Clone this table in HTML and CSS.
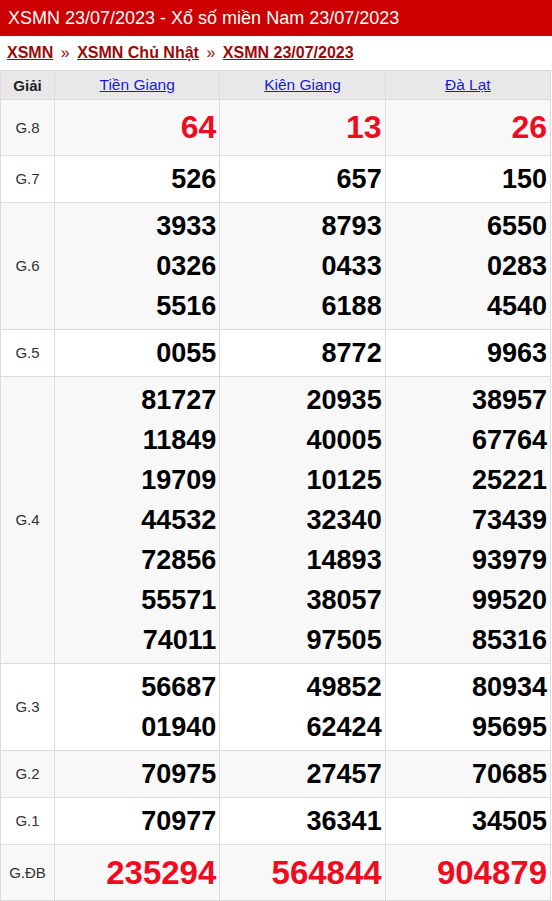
FILE: index.html
```html
<!DOCTYPE html>
<html lang="vi">
<head>
<meta charset="utf-8">
<title>XSMN 23/07/2023</title>
<link rel="stylesheet" href="styles.css">
</head>
<body>
<h1 class="title">XSMN 23/07/2023 - Xổ số miền Nam 23/07/2023</h1>
<div class="crumbs">
  <a href="#">XSMN</a><span class="sep">»</span><a href="#">XSMN Chủ Nhật</a><span class="sep">»</span><a href="#">XSMN 23/07/2023</a>
</div>
<table class="kq">
  <colgroup><col class="c0"><col class="c1"><col class="c1"><col class="c1"></colgroup>
  <thead>
    <tr><th class="lbl-h">Giải</th><th><a href="#">Tiền Giang</a></th><th><a href="#">Kiên Giang</a></th><th><a href="#">Đà Lạt</a></th></tr>
  </thead>
  <tbody>
    <tr class="alt g8"><td class="lbl">G.8</td><td class="red">64</td><td class="red">13</td><td class="red">26</td></tr>
    <tr><td class="lbl">G.7</td><td>526</td><td>657</td><td>150</td></tr>
    <tr class="alt"><td class="lbl">G.6</td><td>3933<br>0326<br>5516</td><td>8793<br>0433<br>6188</td><td>6550<br>0283<br>4540</td></tr>
    <tr><td class="lbl">G.5</td><td>0055</td><td>8772</td><td>9963</td></tr>
    <tr class="alt"><td class="lbl">G.4</td><td>81727<br>11849<br>19709<br>44532<br>72856<br>55571<br>74011</td><td>20935<br>40005<br>10125<br>32340<br>14893<br>38057<br>97505</td><td>38957<br>67764<br>25221<br>73439<br>93979<br>99520<br>85316</td></tr>
    <tr><td class="lbl">G.3</td><td>56687<br>01940</td><td>49852<br>62424</td><td>80934<br>95695</td></tr>
    <tr class="alt"><td class="lbl">G.2</td><td>70975</td><td>27457</td><td>70685</td></tr>
    <tr><td class="lbl">G.1</td><td>70977</td><td>36341</td><td>34505</td></tr>
    <tr class="alt gdb"><td class="lbl">G.ĐB</td><td class="red">235294</td><td class="red">564844</td><td class="red">904879</td></tr>
  </tbody>
</table>
</body>
</html>
```
FILE: styles.css
```css
html, body {
  margin: 0;
  padding: 0;
  background: #fff;
  font-family: "Liberation Sans", Arial, sans-serif;
}
.title {
  margin: 0;
  height: 36px;
  line-height: 36px;
  padding: 0 8px;
  background: #cc0000;
  color: #fff;
  font-size: 18px;
  font-weight: normal;
  white-space: nowrap;
}
.crumbs {
  height: 34px;
  line-height: 34px;
  padding: 0 7px;
  font-size: 16px;
  font-weight: bold;
  white-space: nowrap;
}
.crumbs a {
  color: #9b0a0a;
  text-decoration: underline;
}
.crumbs .sep {
  color: #9b0a0a;
  margin: 0 7.5px;
  font-weight: normal;
}
.kq {
  border-collapse: collapse;
  table-layout: fixed;
  width: 551px;
}
.kq .c0 { width: 54px; }
.kq th, .kq td {
  border: 1px solid #dcdcdc;
}
.kq th {
  background: #e8e8e8;
  height: 28px;
  padding: 0;
  font-size: 15.5px;
  font-weight: normal;
  text-align: center;
}
.kq th.lbl-h {
  font-weight: bold;
  font-size: 15px;
  color: #222;
}
.kq th a {
  color: #1a1ad6;
  text-decoration: underline;
}
.kq td {
  padding: 3px;
  text-align: right;
  font-size: 27px;
  font-weight: bold;
  line-height: 40px;
  color: #000;
}
.kq td.lbl {
  text-align: center;
  font-size: 15px;
  font-weight: normal;
  color: #333;
  padding: 0;
}
.kq tr.alt td { background: #f8f8f8; }
.kq td.red { color: #ee0c1e; }
.kq tr.g8 td.red { font-size: 32px; line-height: 49px; }
.kq tr.gdb td.red { font-size: 33px; line-height: 49px; }
```
